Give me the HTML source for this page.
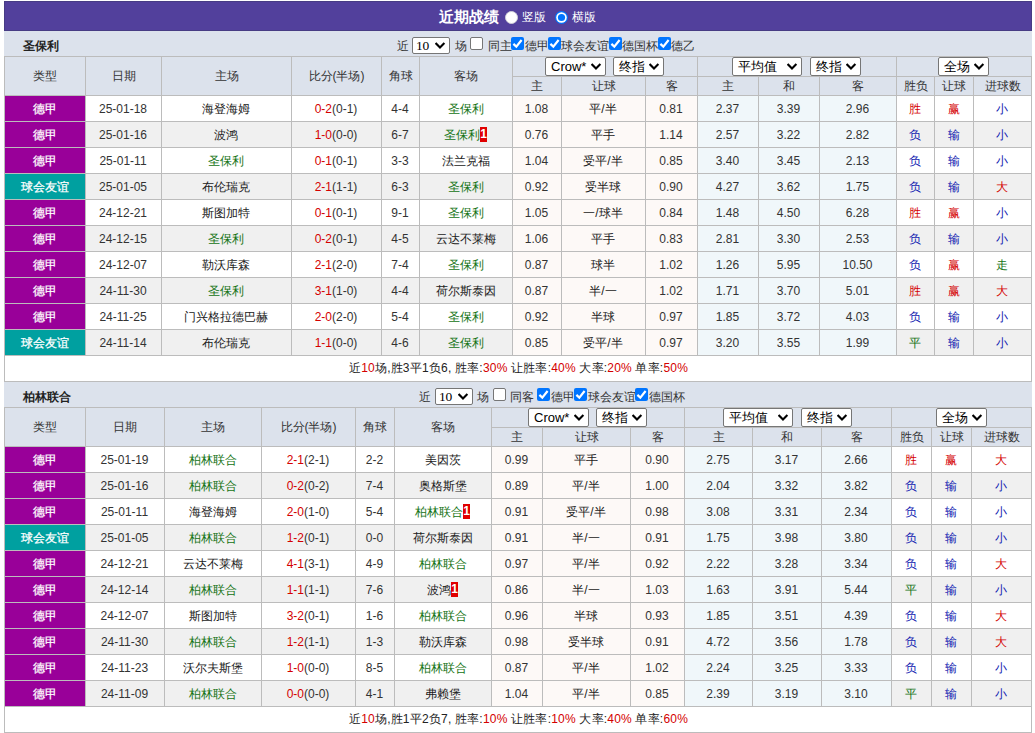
<!DOCTYPE html>
<html><head><meta charset="utf-8"><style>
html,body{margin:0;padding:0;background:#fff;width:1035px;height:733px;overflow:hidden}
body{position:relative;font-family:"Liberation Sans",sans-serif;font-size:12px}
div{position:absolute;box-sizing:border-box;text-align:center;line-height:25px;white-space:nowrap}
em{font-style:normal;color:#d40000}
i.rc{font-style:normal;display:inline-block;background:#e00000;color:#fff;font-weight:bold;width:7px;height:15px;line-height:15px;vertical-align:-2px;font-size:12px;text-align:center;position:relative;top:-3px}
.sel{background:#fff;border:1px solid #767676;border-radius:2px;text-align:left;color:#000}
.cb0{width:13px;height:13px;background:#fff;border:1px solid #767676;border-radius:2px}
.cb1{width:13px;height:13px;background:#0075ff;border-radius:2px;line-height:0}
.cb1 svg{position:absolute;left:0;top:0}
</style></head><body>
<div style="left:4px;top:1px;width:1028px;height:30px;background:#52409c;border:1px solid #473c84"></div>
<div style="left:439px;top:2px;width:70px;height:30px;color:#fff;font-weight:bold;font-size:15px;line-height:30px;text-align:left">近期战绩</div>
<div style="left:505px;top:11px;width:13px;height:13px;line-height:0"><svg width="13" height="13"><circle cx="6.5" cy="6.5" r="6" fill="#fff" stroke="#d0d0d8" stroke-width="1"/></svg></div>
<div style="left:522px;top:2px;width:40px;height:30px;color:#fff;line-height:30px;text-align:left">竖版</div>
<div style="left:555px;top:11px;width:13px;height:13px;line-height:0"><svg width="13" height="13"><circle cx="6.5" cy="6.5" r="6.5" fill="#0075ff"/><circle cx="6.5" cy="6.5" r="5.3" fill="#fff"/><circle cx="6.5" cy="6.5" r="3.6" fill="#0075ff"/></svg></div>
<div style="left:572px;top:2px;width:40px;height:30px;color:#fff;line-height:30px;text-align:left">横版</div>
<div style="left:4px;top:31px;width:1028px;height:25px;background:#dce2ec"></div>
<div style="left:23px;top:34px;width:200px;height:25px;font-weight:bold;color:#222;line-height:25px;text-align:left">圣保利</div>
<div style="left:396.6px;top:34px;width:100px;height:25px;color:#333;text-align:left">近</div>
<div class="sel" style="left:412px;top:37px;width:38px;height:17px;line-height:15px;padding-left:3px;font-family:Liberation Serif,serif;font-size:13.5px;letter-spacing:-0.3px">10<svg width="11" height="7" viewBox="0 0 11 7" style="position:absolute;right:3px;top:4px"><polyline points="0.6,1 5,5.4 9.4,1" fill="none" stroke="#000" stroke-width="2.1"/></svg></div>
<div style="left:455px;top:34px;width:100px;height:25px;color:#333;text-align:left">场</div>
<div class="cb0" style="left:470px;top:37px"></div>
<div style="left:487.7px;top:34px;width:100px;height:25px;color:#333;text-align:left">同主</div>
<div class="cb1" style="left:511px;top:37px"><svg width="13" height="13" viewBox="0 0 13 13"><polyline points="2.4,6.9 5.3,9.6 10.6,3" fill="none" stroke="#fff" stroke-width="2.2"/></svg></div>
<div style="left:525px;top:34px;width:100px;height:25px;color:#333;text-align:left">德甲</div>
<div class="cb1" style="left:548px;top:37px"><svg width="13" height="13" viewBox="0 0 13 13"><polyline points="2.4,6.9 5.3,9.6 10.6,3" fill="none" stroke="#fff" stroke-width="2.2"/></svg></div>
<div style="left:561.3px;top:34px;width:100px;height:25px;color:#333;text-align:left">球会友谊</div>
<div class="cb1" style="left:609px;top:37px"><svg width="13" height="13" viewBox="0 0 13 13"><polyline points="2.4,6.9 5.3,9.6 10.6,3" fill="none" stroke="#fff" stroke-width="2.2"/></svg></div>
<div style="left:622px;top:34px;width:100px;height:25px;color:#333;text-align:left">德国杯</div>
<div class="cb1" style="left:658px;top:37px"><svg width="13" height="13" viewBox="0 0 13 13"><polyline points="2.4,6.9 5.3,9.6 10.6,3" fill="none" stroke="#fff" stroke-width="2.2"/></svg></div>
<div style="left:671px;top:34px;width:100px;height:25px;color:#333;text-align:left">德乙</div>
<div style="left:4px;top:56px;width:1028px;height:40px;background:#dce2ec"></div>
<div style="left:5px;top:96px;width:1026px;height:25px;background:#ffffff"></div>
<div style="left:5px;top:96px;width:80px;height:25px;background:#990099"></div>
<div style="left:5px;top:97px;width:80px;height:25px;color:#fff;-webkit-text-stroke:0.25px #fff">德甲</div>
<div style="left:513px;top:96px;width:184px;height:25px;background:#fdf9f7"></div>
<div style="left:698px;top:96px;width:198px;height:25px;background:#f0f7fa"></div>
<div style="left:85.5px;top:97px;width:75px;height:25px;color:#333">25-01-18</div>
<div style="left:161.5px;top:97px;width:129px;height:25px;color:#222"><span style="color:#222">海登海姆</span></div>
<div style="left:291.5px;top:97px;width:89px;height:25px;color:#222"><span style="color:#d40000">0-2</span><span style="color:#333">(0-1)</span></div>
<div style="left:381.5px;top:97px;width:37px;height:25px;color:#333">4-4</div>
<div style="left:419.5px;top:97px;width:92px;height:25px;color:#222"><span style="color:#137313">圣保利</span></div>
<div style="left:512.5px;top:97px;width:48px;height:25px;color:#333">1.08</div>
<div style="left:561.5px;top:97px;width:83px;height:25px;color:#222">平/半</div>
<div style="left:645.5px;top:97px;width:51px;height:25px;color:#333">0.81</div>
<div style="left:697.5px;top:97px;width:60px;height:25px;color:#333">2.37</div>
<div style="left:758.5px;top:97px;width:60px;height:25px;color:#333">3.39</div>
<div style="left:819.5px;top:97px;width:76px;height:25px;color:#333">2.96</div>
<div style="left:896.5px;top:97px;width:37px;height:25px;color:#222"><span style="color:#d40000">胜</span></div>
<div style="left:934.5px;top:97px;width:38px;height:25px;color:#222"><span style="color:#d40000">赢</span></div>
<div style="left:973.5px;top:97px;width:57px;height:25px;color:#222"><span style="color:#1020b0">小</span></div>
<div style="left:5px;top:122px;width:1026px;height:25px;background:#f0f0f0"></div>
<div style="left:5px;top:122px;width:80px;height:25px;background:#990099"></div>
<div style="left:5px;top:123px;width:80px;height:25px;color:#fff;-webkit-text-stroke:0.25px #fff">德甲</div>
<div style="left:513px;top:122px;width:184px;height:25px;background:#fdf9f7"></div>
<div style="left:698px;top:122px;width:198px;height:25px;background:#f0f7fa"></div>
<div style="left:85.5px;top:123px;width:75px;height:25px;color:#333">25-01-16</div>
<div style="left:161.5px;top:123px;width:129px;height:25px;color:#222"><span style="color:#222">波鸿</span></div>
<div style="left:291.5px;top:123px;width:89px;height:25px;color:#222"><span style="color:#d40000">1-0</span><span style="color:#333">(0-0)</span></div>
<div style="left:381.5px;top:123px;width:37px;height:25px;color:#333">6-7</div>
<div style="left:419.5px;top:123px;width:92px;height:25px;color:#222"><span style="color:#137313">圣保利</span><i class="rc">1</i></div>
<div style="left:512.5px;top:123px;width:48px;height:25px;color:#333">0.76</div>
<div style="left:561.5px;top:123px;width:83px;height:25px;color:#222">平手</div>
<div style="left:645.5px;top:123px;width:51px;height:25px;color:#333">1.14</div>
<div style="left:697.5px;top:123px;width:60px;height:25px;color:#333">2.57</div>
<div style="left:758.5px;top:123px;width:60px;height:25px;color:#333">3.22</div>
<div style="left:819.5px;top:123px;width:76px;height:25px;color:#333">2.82</div>
<div style="left:896.5px;top:123px;width:37px;height:25px;color:#222"><span style="color:#1020b0">负</span></div>
<div style="left:934.5px;top:123px;width:38px;height:25px;color:#222"><span style="color:#1020b0">输</span></div>
<div style="left:973.5px;top:123px;width:57px;height:25px;color:#222"><span style="color:#1020b0">小</span></div>
<div style="left:5px;top:148px;width:1026px;height:25px;background:#ffffff"></div>
<div style="left:5px;top:148px;width:80px;height:25px;background:#990099"></div>
<div style="left:5px;top:149px;width:80px;height:25px;color:#fff;-webkit-text-stroke:0.25px #fff">德甲</div>
<div style="left:513px;top:148px;width:184px;height:25px;background:#fdf9f7"></div>
<div style="left:698px;top:148px;width:198px;height:25px;background:#f0f7fa"></div>
<div style="left:85.5px;top:149px;width:75px;height:25px;color:#333">25-01-11</div>
<div style="left:161.5px;top:149px;width:129px;height:25px;color:#222"><span style="color:#137313">圣保利</span></div>
<div style="left:291.5px;top:149px;width:89px;height:25px;color:#222"><span style="color:#d40000">0-1</span><span style="color:#333">(0-1)</span></div>
<div style="left:381.5px;top:149px;width:37px;height:25px;color:#333">3-3</div>
<div style="left:419.5px;top:149px;width:92px;height:25px;color:#222"><span style="color:#222">法兰克福</span></div>
<div style="left:512.5px;top:149px;width:48px;height:25px;color:#333">1.04</div>
<div style="left:561.5px;top:149px;width:83px;height:25px;color:#222">受平/半</div>
<div style="left:645.5px;top:149px;width:51px;height:25px;color:#333">0.85</div>
<div style="left:697.5px;top:149px;width:60px;height:25px;color:#333">3.40</div>
<div style="left:758.5px;top:149px;width:60px;height:25px;color:#333">3.45</div>
<div style="left:819.5px;top:149px;width:76px;height:25px;color:#333">2.13</div>
<div style="left:896.5px;top:149px;width:37px;height:25px;color:#222"><span style="color:#1020b0">负</span></div>
<div style="left:934.5px;top:149px;width:38px;height:25px;color:#222"><span style="color:#1020b0">输</span></div>
<div style="left:973.5px;top:149px;width:57px;height:25px;color:#222"><span style="color:#1020b0">小</span></div>
<div style="left:5px;top:174px;width:1026px;height:25px;background:#f0f0f0"></div>
<div style="left:5px;top:174px;width:80px;height:25px;background:#00a0a0"></div>
<div style="left:5px;top:175px;width:80px;height:25px;color:#fff;-webkit-text-stroke:0.25px #fff">球会友谊</div>
<div style="left:513px;top:174px;width:184px;height:25px;background:#fdf9f7"></div>
<div style="left:698px;top:174px;width:198px;height:25px;background:#f0f7fa"></div>
<div style="left:85.5px;top:175px;width:75px;height:25px;color:#333">25-01-05</div>
<div style="left:161.5px;top:175px;width:129px;height:25px;color:#222"><span style="color:#222">布伦瑞克</span></div>
<div style="left:291.5px;top:175px;width:89px;height:25px;color:#222"><span style="color:#d40000">2-1</span><span style="color:#333">(1-1)</span></div>
<div style="left:381.5px;top:175px;width:37px;height:25px;color:#333">6-3</div>
<div style="left:419.5px;top:175px;width:92px;height:25px;color:#222"><span style="color:#137313">圣保利</span></div>
<div style="left:512.5px;top:175px;width:48px;height:25px;color:#333">0.92</div>
<div style="left:561.5px;top:175px;width:83px;height:25px;color:#222">受半球</div>
<div style="left:645.5px;top:175px;width:51px;height:25px;color:#333">0.90</div>
<div style="left:697.5px;top:175px;width:60px;height:25px;color:#333">4.27</div>
<div style="left:758.5px;top:175px;width:60px;height:25px;color:#333">3.62</div>
<div style="left:819.5px;top:175px;width:76px;height:25px;color:#333">1.75</div>
<div style="left:896.5px;top:175px;width:37px;height:25px;color:#222"><span style="color:#1020b0">负</span></div>
<div style="left:934.5px;top:175px;width:38px;height:25px;color:#222"><span style="color:#1020b0">输</span></div>
<div style="left:973.5px;top:175px;width:57px;height:25px;color:#222"><span style="color:#d40000">大</span></div>
<div style="left:5px;top:200px;width:1026px;height:25px;background:#ffffff"></div>
<div style="left:5px;top:200px;width:80px;height:25px;background:#990099"></div>
<div style="left:5px;top:201px;width:80px;height:25px;color:#fff;-webkit-text-stroke:0.25px #fff">德甲</div>
<div style="left:513px;top:200px;width:184px;height:25px;background:#fdf9f7"></div>
<div style="left:698px;top:200px;width:198px;height:25px;background:#f0f7fa"></div>
<div style="left:85.5px;top:201px;width:75px;height:25px;color:#333">24-12-21</div>
<div style="left:161.5px;top:201px;width:129px;height:25px;color:#222"><span style="color:#222">斯图加特</span></div>
<div style="left:291.5px;top:201px;width:89px;height:25px;color:#222"><span style="color:#d40000">0-1</span><span style="color:#333">(0-1)</span></div>
<div style="left:381.5px;top:201px;width:37px;height:25px;color:#333">9-1</div>
<div style="left:419.5px;top:201px;width:92px;height:25px;color:#222"><span style="color:#137313">圣保利</span></div>
<div style="left:512.5px;top:201px;width:48px;height:25px;color:#333">1.05</div>
<div style="left:561.5px;top:201px;width:83px;height:25px;color:#222">一/球半</div>
<div style="left:645.5px;top:201px;width:51px;height:25px;color:#333">0.84</div>
<div style="left:697.5px;top:201px;width:60px;height:25px;color:#333">1.48</div>
<div style="left:758.5px;top:201px;width:60px;height:25px;color:#333">4.50</div>
<div style="left:819.5px;top:201px;width:76px;height:25px;color:#333">6.28</div>
<div style="left:896.5px;top:201px;width:37px;height:25px;color:#222"><span style="color:#d40000">胜</span></div>
<div style="left:934.5px;top:201px;width:38px;height:25px;color:#222"><span style="color:#d40000">赢</span></div>
<div style="left:973.5px;top:201px;width:57px;height:25px;color:#222"><span style="color:#1020b0">小</span></div>
<div style="left:5px;top:226px;width:1026px;height:25px;background:#f0f0f0"></div>
<div style="left:5px;top:226px;width:80px;height:25px;background:#990099"></div>
<div style="left:5px;top:227px;width:80px;height:25px;color:#fff;-webkit-text-stroke:0.25px #fff">德甲</div>
<div style="left:513px;top:226px;width:184px;height:25px;background:#fdf9f7"></div>
<div style="left:698px;top:226px;width:198px;height:25px;background:#f0f7fa"></div>
<div style="left:85.5px;top:227px;width:75px;height:25px;color:#333">24-12-15</div>
<div style="left:161.5px;top:227px;width:129px;height:25px;color:#222"><span style="color:#137313">圣保利</span></div>
<div style="left:291.5px;top:227px;width:89px;height:25px;color:#222"><span style="color:#d40000">0-2</span><span style="color:#333">(0-1)</span></div>
<div style="left:381.5px;top:227px;width:37px;height:25px;color:#333">4-5</div>
<div style="left:419.5px;top:227px;width:92px;height:25px;color:#222"><span style="color:#222">云达不莱梅</span></div>
<div style="left:512.5px;top:227px;width:48px;height:25px;color:#333">1.06</div>
<div style="left:561.5px;top:227px;width:83px;height:25px;color:#222">平手</div>
<div style="left:645.5px;top:227px;width:51px;height:25px;color:#333">0.83</div>
<div style="left:697.5px;top:227px;width:60px;height:25px;color:#333">2.81</div>
<div style="left:758.5px;top:227px;width:60px;height:25px;color:#333">3.30</div>
<div style="left:819.5px;top:227px;width:76px;height:25px;color:#333">2.53</div>
<div style="left:896.5px;top:227px;width:37px;height:25px;color:#222"><span style="color:#1020b0">负</span></div>
<div style="left:934.5px;top:227px;width:38px;height:25px;color:#222"><span style="color:#1020b0">输</span></div>
<div style="left:973.5px;top:227px;width:57px;height:25px;color:#222"><span style="color:#1020b0">小</span></div>
<div style="left:5px;top:252px;width:1026px;height:25px;background:#ffffff"></div>
<div style="left:5px;top:252px;width:80px;height:25px;background:#990099"></div>
<div style="left:5px;top:253px;width:80px;height:25px;color:#fff;-webkit-text-stroke:0.25px #fff">德甲</div>
<div style="left:513px;top:252px;width:184px;height:25px;background:#fdf9f7"></div>
<div style="left:698px;top:252px;width:198px;height:25px;background:#f0f7fa"></div>
<div style="left:85.5px;top:253px;width:75px;height:25px;color:#333">24-12-07</div>
<div style="left:161.5px;top:253px;width:129px;height:25px;color:#222"><span style="color:#222">勒沃库森</span></div>
<div style="left:291.5px;top:253px;width:89px;height:25px;color:#222"><span style="color:#d40000">2-1</span><span style="color:#333">(2-0)</span></div>
<div style="left:381.5px;top:253px;width:37px;height:25px;color:#333">7-4</div>
<div style="left:419.5px;top:253px;width:92px;height:25px;color:#222"><span style="color:#137313">圣保利</span></div>
<div style="left:512.5px;top:253px;width:48px;height:25px;color:#333">0.87</div>
<div style="left:561.5px;top:253px;width:83px;height:25px;color:#222">球半</div>
<div style="left:645.5px;top:253px;width:51px;height:25px;color:#333">1.02</div>
<div style="left:697.5px;top:253px;width:60px;height:25px;color:#333">1.26</div>
<div style="left:758.5px;top:253px;width:60px;height:25px;color:#333">5.95</div>
<div style="left:819.5px;top:253px;width:76px;height:25px;color:#333">10.50</div>
<div style="left:896.5px;top:253px;width:37px;height:25px;color:#222"><span style="color:#1020b0">负</span></div>
<div style="left:934.5px;top:253px;width:38px;height:25px;color:#222"><span style="color:#d40000">赢</span></div>
<div style="left:973.5px;top:253px;width:57px;height:25px;color:#222"><span style="color:#137313">走</span></div>
<div style="left:5px;top:278px;width:1026px;height:25px;background:#f0f0f0"></div>
<div style="left:5px;top:278px;width:80px;height:25px;background:#990099"></div>
<div style="left:5px;top:279px;width:80px;height:25px;color:#fff;-webkit-text-stroke:0.25px #fff">德甲</div>
<div style="left:513px;top:278px;width:184px;height:25px;background:#fdf9f7"></div>
<div style="left:698px;top:278px;width:198px;height:25px;background:#f0f7fa"></div>
<div style="left:85.5px;top:279px;width:75px;height:25px;color:#333">24-11-30</div>
<div style="left:161.5px;top:279px;width:129px;height:25px;color:#222"><span style="color:#137313">圣保利</span></div>
<div style="left:291.5px;top:279px;width:89px;height:25px;color:#222"><span style="color:#d40000">3-1</span><span style="color:#333">(1-0)</span></div>
<div style="left:381.5px;top:279px;width:37px;height:25px;color:#333">4-4</div>
<div style="left:419.5px;top:279px;width:92px;height:25px;color:#222"><span style="color:#222">荷尔斯泰因</span></div>
<div style="left:512.5px;top:279px;width:48px;height:25px;color:#333">0.87</div>
<div style="left:561.5px;top:279px;width:83px;height:25px;color:#222">半/一</div>
<div style="left:645.5px;top:279px;width:51px;height:25px;color:#333">1.02</div>
<div style="left:697.5px;top:279px;width:60px;height:25px;color:#333">1.71</div>
<div style="left:758.5px;top:279px;width:60px;height:25px;color:#333">3.70</div>
<div style="left:819.5px;top:279px;width:76px;height:25px;color:#333">5.01</div>
<div style="left:896.5px;top:279px;width:37px;height:25px;color:#222"><span style="color:#d40000">胜</span></div>
<div style="left:934.5px;top:279px;width:38px;height:25px;color:#222"><span style="color:#d40000">赢</span></div>
<div style="left:973.5px;top:279px;width:57px;height:25px;color:#222"><span style="color:#d40000">大</span></div>
<div style="left:5px;top:304px;width:1026px;height:25px;background:#ffffff"></div>
<div style="left:5px;top:304px;width:80px;height:25px;background:#990099"></div>
<div style="left:5px;top:305px;width:80px;height:25px;color:#fff;-webkit-text-stroke:0.25px #fff">德甲</div>
<div style="left:513px;top:304px;width:184px;height:25px;background:#fdf9f7"></div>
<div style="left:698px;top:304px;width:198px;height:25px;background:#f0f7fa"></div>
<div style="left:85.5px;top:305px;width:75px;height:25px;color:#333">24-11-25</div>
<div style="left:161.5px;top:305px;width:129px;height:25px;color:#222"><span style="color:#222">门兴格拉德巴赫</span></div>
<div style="left:291.5px;top:305px;width:89px;height:25px;color:#222"><span style="color:#d40000">2-0</span><span style="color:#333">(2-0)</span></div>
<div style="left:381.5px;top:305px;width:37px;height:25px;color:#333">5-4</div>
<div style="left:419.5px;top:305px;width:92px;height:25px;color:#222"><span style="color:#137313">圣保利</span></div>
<div style="left:512.5px;top:305px;width:48px;height:25px;color:#333">0.92</div>
<div style="left:561.5px;top:305px;width:83px;height:25px;color:#222">半球</div>
<div style="left:645.5px;top:305px;width:51px;height:25px;color:#333">0.97</div>
<div style="left:697.5px;top:305px;width:60px;height:25px;color:#333">1.85</div>
<div style="left:758.5px;top:305px;width:60px;height:25px;color:#333">3.72</div>
<div style="left:819.5px;top:305px;width:76px;height:25px;color:#333">4.03</div>
<div style="left:896.5px;top:305px;width:37px;height:25px;color:#222"><span style="color:#1020b0">负</span></div>
<div style="left:934.5px;top:305px;width:38px;height:25px;color:#222"><span style="color:#1020b0">输</span></div>
<div style="left:973.5px;top:305px;width:57px;height:25px;color:#222"><span style="color:#1020b0">小</span></div>
<div style="left:5px;top:330px;width:1026px;height:25px;background:#f0f0f0"></div>
<div style="left:5px;top:330px;width:80px;height:25px;background:#00a0a0"></div>
<div style="left:5px;top:331px;width:80px;height:25px;color:#fff;-webkit-text-stroke:0.25px #fff">球会友谊</div>
<div style="left:513px;top:330px;width:184px;height:25px;background:#fdf9f7"></div>
<div style="left:698px;top:330px;width:198px;height:25px;background:#f0f7fa"></div>
<div style="left:85.5px;top:331px;width:75px;height:25px;color:#333">24-11-14</div>
<div style="left:161.5px;top:331px;width:129px;height:25px;color:#222"><span style="color:#222">布伦瑞克</span></div>
<div style="left:291.5px;top:331px;width:89px;height:25px;color:#222"><span style="color:#d40000">1-1</span><span style="color:#333">(0-0)</span></div>
<div style="left:381.5px;top:331px;width:37px;height:25px;color:#333">4-6</div>
<div style="left:419.5px;top:331px;width:92px;height:25px;color:#222"><span style="color:#137313">圣保利</span></div>
<div style="left:512.5px;top:331px;width:48px;height:25px;color:#333">0.85</div>
<div style="left:561.5px;top:331px;width:83px;height:25px;color:#222">受平/半</div>
<div style="left:645.5px;top:331px;width:51px;height:25px;color:#333">0.97</div>
<div style="left:697.5px;top:331px;width:60px;height:25px;color:#333">3.20</div>
<div style="left:758.5px;top:331px;width:60px;height:25px;color:#333">3.55</div>
<div style="left:819.5px;top:331px;width:76px;height:25px;color:#333">1.99</div>
<div style="left:896.5px;top:331px;width:37px;height:25px;color:#222"><span style="color:#137313">平</span></div>
<div style="left:934.5px;top:331px;width:38px;height:25px;color:#222"><span style="color:#1020b0">输</span></div>
<div style="left:973.5px;top:331px;width:57px;height:25px;color:#222"><span style="color:#1020b0">小</span></div>
<div style="left:5px;top:356px;width:1026px;height:25px;background:#fff"></div>
<div style="left:5px;top:356px;width:1026px;height:25px;color:#222;letter-spacing:0.2px;padding-left:1px">近<em>10</em>场,胜3平1负6, 胜率:<em>30%</em> 让胜率:<em>40%</em> 大率:<em>20%</em> 单率:<em>50%</em></div>
<div style="left:5px;top:57px;width:80px;height:39px;color:#333;line-height:39px">类型</div>
<div style="left:86px;top:57px;width:75px;height:39px;color:#333;line-height:39px">日期</div>
<div style="left:162px;top:57px;width:129px;height:39px;color:#333;line-height:39px">主场</div>
<div style="left:292px;top:57px;width:89px;height:39px;color:#333;line-height:39px">比分(半场)</div>
<div style="left:382px;top:57px;width:37px;height:39px;color:#333;line-height:39px">角球</div>
<div style="left:420px;top:57px;width:92px;height:39px;color:#333;line-height:39px">客场</div>
<div style="left:513px;top:77px;width:48px;height:18px;color:#333;line-height:18px">主</div>
<div style="left:562px;top:77px;width:83px;height:18px;color:#333;line-height:18px">让球</div>
<div style="left:646px;top:77px;width:51px;height:18px;color:#333;line-height:18px">客</div>
<div style="left:698px;top:77px;width:60px;height:18px;color:#333;line-height:18px">主</div>
<div style="left:759px;top:77px;width:60px;height:18px;color:#333;line-height:18px">和</div>
<div style="left:820px;top:77px;width:76px;height:18px;color:#333;line-height:18px">客</div>
<div style="left:897px;top:77px;width:37px;height:18px;color:#333;line-height:18px">胜负</div>
<div style="left:935px;top:77px;width:38px;height:18px;color:#333;line-height:18px">让球</div>
<div style="left:974px;top:77px;width:57px;height:18px;color:#333;line-height:18px">进球数</div>
<div style="left:4px;top:56px;width:1px;height:326px;background:#bcbcbc"></div>
<div style="left:85px;top:56px;width:1px;height:300px;background:#bcbcbc"></div>
<div style="left:161px;top:56px;width:1px;height:300px;background:#bcbcbc"></div>
<div style="left:291px;top:56px;width:1px;height:300px;background:#bcbcbc"></div>
<div style="left:381px;top:56px;width:1px;height:300px;background:#bcbcbc"></div>
<div style="left:419px;top:56px;width:1px;height:300px;background:#bcbcbc"></div>
<div style="left:512px;top:56px;width:1px;height:300px;background:#bcbcbc"></div>
<div style="left:561px;top:76px;width:1px;height:280px;background:#bcbcbc"></div>
<div style="left:645px;top:76px;width:1px;height:280px;background:#bcbcbc"></div>
<div style="left:697px;top:56px;width:1px;height:300px;background:#bcbcbc"></div>
<div style="left:758px;top:76px;width:1px;height:280px;background:#bcbcbc"></div>
<div style="left:819px;top:76px;width:1px;height:280px;background:#bcbcbc"></div>
<div style="left:896px;top:56px;width:1px;height:300px;background:#bcbcbc"></div>
<div style="left:934px;top:76px;width:1px;height:280px;background:#bcbcbc"></div>
<div style="left:973px;top:76px;width:1px;height:280px;background:#bcbcbc"></div>
<div style="left:1031px;top:56px;width:1px;height:326px;background:#bcbcbc"></div>
<div style="left:4px;top:56px;width:1028px;height:1px;background:#bcbcbc"></div>
<div style="left:512px;top:76px;width:519px;height:1px;background:#bcbcbc"></div>
<div style="left:4px;top:95px;width:1028px;height:1px;background:#bcbcbc"></div>
<div style="left:4px;top:121px;width:1028px;height:1px;background:#bcbcbc"></div>
<div style="left:4px;top:147px;width:1028px;height:1px;background:#bcbcbc"></div>
<div style="left:4px;top:173px;width:1028px;height:1px;background:#bcbcbc"></div>
<div style="left:4px;top:199px;width:1028px;height:1px;background:#bcbcbc"></div>
<div style="left:4px;top:225px;width:1028px;height:1px;background:#bcbcbc"></div>
<div style="left:4px;top:251px;width:1028px;height:1px;background:#bcbcbc"></div>
<div style="left:4px;top:277px;width:1028px;height:1px;background:#bcbcbc"></div>
<div style="left:4px;top:303px;width:1028px;height:1px;background:#bcbcbc"></div>
<div style="left:4px;top:329px;width:1028px;height:1px;background:#bcbcbc"></div>
<div style="left:4px;top:355px;width:1028px;height:1px;background:#bcbcbc"></div>
<div style="left:4px;top:381px;width:1028px;height:1px;background:#bcbcbc"></div>
<div style="left:4px;top:381px;width:1028px;height:1px;background:#bcbcbc"></div>
<div class="sel" style="left:545px;top:57px;width:61px;height:19px;line-height:17px;padding-left:5px;font-size:13px">Crow*<svg width="11" height="7" viewBox="0 0 11 7" style="position:absolute;right:3px;top:5px"><polyline points="0.6,1 5,5.4 9.4,1" fill="none" stroke="#000" stroke-width="2.1"/></svg></div>
<div class="sel" style="left:613px;top:57px;width:51px;height:19px;line-height:17px;padding-left:5px;font-size:13px">终指<svg width="11" height="7" viewBox="0 0 11 7" style="position:absolute;right:3px;top:5px"><polyline points="0.6,1 5,5.4 9.4,1" fill="none" stroke="#000" stroke-width="2.1"/></svg></div>
<div class="sel" style="left:732px;top:57px;width:70px;height:19px;line-height:17px;padding-left:5px;font-size:13px">平均值<svg width="11" height="7" viewBox="0 0 11 7" style="position:absolute;right:3px;top:5px"><polyline points="0.6,1 5,5.4 9.4,1" fill="none" stroke="#000" stroke-width="2.1"/></svg></div>
<div class="sel" style="left:810px;top:57px;width:51px;height:19px;line-height:17px;padding-left:5px;font-size:13px">终指<svg width="11" height="7" viewBox="0 0 11 7" style="position:absolute;right:3px;top:5px"><polyline points="0.6,1 5,5.4 9.4,1" fill="none" stroke="#000" stroke-width="2.1"/></svg></div>
<div class="sel" style="left:938px;top:57px;width:51px;height:19px;line-height:17px;padding-left:5px;font-size:13px">全场<svg width="11" height="7" viewBox="0 0 11 7" style="position:absolute;right:3px;top:5px"><polyline points="0.6,1 5,5.4 9.4,1" fill="none" stroke="#000" stroke-width="2.1"/></svg></div>
<div style="left:4px;top:382px;width:1028px;height:25px;background:#dce2ec"></div>
<div style="left:23px;top:385px;width:200px;height:25px;font-weight:bold;color:#222;line-height:25px;text-align:left">柏林联合</div>
<div style="left:419.4px;top:385px;width:100px;height:25px;color:#333;text-align:left">近</div>
<div class="sel" style="left:435px;top:388px;width:38px;height:17px;line-height:15px;padding-left:3px;font-family:Liberation Serif,serif;font-size:13.5px;letter-spacing:-0.3px">10<svg width="11" height="7" viewBox="0 0 11 7" style="position:absolute;right:3px;top:4px"><polyline points="0.6,1 5,5.4 9.4,1" fill="none" stroke="#000" stroke-width="2.1"/></svg></div>
<div style="left:477.4px;top:385px;width:100px;height:25px;color:#333;text-align:left">场</div>
<div class="cb0" style="left:493px;top:388px"></div>
<div style="left:510px;top:385px;width:100px;height:25px;color:#333;text-align:left">同客</div>
<div class="cb1" style="left:537px;top:388px"><svg width="13" height="13" viewBox="0 0 13 13"><polyline points="2.4,6.9 5.3,9.6 10.6,3" fill="none" stroke="#fff" stroke-width="2.2"/></svg></div>
<div style="left:551.2px;top:385px;width:100px;height:25px;color:#333;text-align:left">德甲</div>
<div class="cb1" style="left:574px;top:388px"><svg width="13" height="13" viewBox="0 0 13 13"><polyline points="2.4,6.9 5.3,9.6 10.6,3" fill="none" stroke="#fff" stroke-width="2.2"/></svg></div>
<div style="left:588px;top:385px;width:100px;height:25px;color:#333;text-align:left">球会友谊</div>
<div class="cb1" style="left:635px;top:388px"><svg width="13" height="13" viewBox="0 0 13 13"><polyline points="2.4,6.9 5.3,9.6 10.6,3" fill="none" stroke="#fff" stroke-width="2.2"/></svg></div>
<div style="left:649.3px;top:385px;width:100px;height:25px;color:#333;text-align:left">德国杯</div>
<div style="left:4px;top:407px;width:1028px;height:40px;background:#dce2ec"></div>
<div style="left:5px;top:447px;width:1026px;height:25px;background:#ffffff"></div>
<div style="left:5px;top:447px;width:80px;height:25px;background:#990099"></div>
<div style="left:5px;top:448px;width:80px;height:25px;color:#fff;-webkit-text-stroke:0.25px #fff">德甲</div>
<div style="left:492px;top:447px;width:192px;height:25px;background:#fdf9f7"></div>
<div style="left:685px;top:447px;width:206px;height:25px;background:#f0f7fa"></div>
<div style="left:85.5px;top:448px;width:78px;height:25px;color:#333">25-01-19</div>
<div style="left:164.5px;top:448px;width:96px;height:25px;color:#222"><span style="color:#137313">柏林联合</span></div>
<div style="left:261.5px;top:448px;width:93px;height:25px;color:#222"><span style="color:#d40000">2-1</span><span style="color:#333">(2-1)</span></div>
<div style="left:355.5px;top:448px;width:38px;height:25px;color:#333">2-2</div>
<div style="left:394.5px;top:448px;width:96px;height:25px;color:#222"><span style="color:#222">美因茨</span></div>
<div style="left:491.5px;top:448px;width:50px;height:25px;color:#333">0.99</div>
<div style="left:542.5px;top:448px;width:87px;height:25px;color:#222">平手</div>
<div style="left:630.5px;top:448px;width:53px;height:25px;color:#333">0.90</div>
<div style="left:684.5px;top:448px;width:67px;height:25px;color:#333">2.75</div>
<div style="left:752.5px;top:448px;width:68px;height:25px;color:#333">3.17</div>
<div style="left:821.5px;top:448px;width:69px;height:25px;color:#333">2.66</div>
<div style="left:891.5px;top:448px;width:39px;height:25px;color:#222"><span style="color:#d40000">胜</span></div>
<div style="left:931.5px;top:448px;width:39px;height:25px;color:#222"><span style="color:#d40000">赢</span></div>
<div style="left:971.5px;top:448px;width:59px;height:25px;color:#222"><span style="color:#d40000">大</span></div>
<div style="left:5px;top:473px;width:1026px;height:25px;background:#f0f0f0"></div>
<div style="left:5px;top:473px;width:80px;height:25px;background:#990099"></div>
<div style="left:5px;top:474px;width:80px;height:25px;color:#fff;-webkit-text-stroke:0.25px #fff">德甲</div>
<div style="left:492px;top:473px;width:192px;height:25px;background:#fdf9f7"></div>
<div style="left:685px;top:473px;width:206px;height:25px;background:#f0f7fa"></div>
<div style="left:85.5px;top:474px;width:78px;height:25px;color:#333">25-01-16</div>
<div style="left:164.5px;top:474px;width:96px;height:25px;color:#222"><span style="color:#137313">柏林联合</span></div>
<div style="left:261.5px;top:474px;width:93px;height:25px;color:#222"><span style="color:#d40000">0-2</span><span style="color:#333">(0-2)</span></div>
<div style="left:355.5px;top:474px;width:38px;height:25px;color:#333">7-4</div>
<div style="left:394.5px;top:474px;width:96px;height:25px;color:#222"><span style="color:#222">奥格斯堡</span></div>
<div style="left:491.5px;top:474px;width:50px;height:25px;color:#333">0.89</div>
<div style="left:542.5px;top:474px;width:87px;height:25px;color:#222">平/半</div>
<div style="left:630.5px;top:474px;width:53px;height:25px;color:#333">1.00</div>
<div style="left:684.5px;top:474px;width:67px;height:25px;color:#333">2.04</div>
<div style="left:752.5px;top:474px;width:68px;height:25px;color:#333">3.32</div>
<div style="left:821.5px;top:474px;width:69px;height:25px;color:#333">3.82</div>
<div style="left:891.5px;top:474px;width:39px;height:25px;color:#222"><span style="color:#1020b0">负</span></div>
<div style="left:931.5px;top:474px;width:39px;height:25px;color:#222"><span style="color:#1020b0">输</span></div>
<div style="left:971.5px;top:474px;width:59px;height:25px;color:#222"><span style="color:#1020b0">小</span></div>
<div style="left:5px;top:499px;width:1026px;height:25px;background:#ffffff"></div>
<div style="left:5px;top:499px;width:80px;height:25px;background:#990099"></div>
<div style="left:5px;top:500px;width:80px;height:25px;color:#fff;-webkit-text-stroke:0.25px #fff">德甲</div>
<div style="left:492px;top:499px;width:192px;height:25px;background:#fdf9f7"></div>
<div style="left:685px;top:499px;width:206px;height:25px;background:#f0f7fa"></div>
<div style="left:85.5px;top:500px;width:78px;height:25px;color:#333">25-01-11</div>
<div style="left:164.5px;top:500px;width:96px;height:25px;color:#222"><span style="color:#222">海登海姆</span></div>
<div style="left:261.5px;top:500px;width:93px;height:25px;color:#222"><span style="color:#d40000">2-0</span><span style="color:#333">(1-0)</span></div>
<div style="left:355.5px;top:500px;width:38px;height:25px;color:#333">5-4</div>
<div style="left:394.5px;top:500px;width:96px;height:25px;color:#222"><span style="color:#137313">柏林联合</span><i class="rc">1</i></div>
<div style="left:491.5px;top:500px;width:50px;height:25px;color:#333">0.91</div>
<div style="left:542.5px;top:500px;width:87px;height:25px;color:#222">受平/半</div>
<div style="left:630.5px;top:500px;width:53px;height:25px;color:#333">0.98</div>
<div style="left:684.5px;top:500px;width:67px;height:25px;color:#333">3.08</div>
<div style="left:752.5px;top:500px;width:68px;height:25px;color:#333">3.31</div>
<div style="left:821.5px;top:500px;width:69px;height:25px;color:#333">2.34</div>
<div style="left:891.5px;top:500px;width:39px;height:25px;color:#222"><span style="color:#1020b0">负</span></div>
<div style="left:931.5px;top:500px;width:39px;height:25px;color:#222"><span style="color:#1020b0">输</span></div>
<div style="left:971.5px;top:500px;width:59px;height:25px;color:#222"><span style="color:#1020b0">小</span></div>
<div style="left:5px;top:525px;width:1026px;height:25px;background:#f0f0f0"></div>
<div style="left:5px;top:525px;width:80px;height:25px;background:#00a0a0"></div>
<div style="left:5px;top:526px;width:80px;height:25px;color:#fff;-webkit-text-stroke:0.25px #fff">球会友谊</div>
<div style="left:492px;top:525px;width:192px;height:25px;background:#fdf9f7"></div>
<div style="left:685px;top:525px;width:206px;height:25px;background:#f0f7fa"></div>
<div style="left:85.5px;top:526px;width:78px;height:25px;color:#333">25-01-05</div>
<div style="left:164.5px;top:526px;width:96px;height:25px;color:#222"><span style="color:#137313">柏林联合</span></div>
<div style="left:261.5px;top:526px;width:93px;height:25px;color:#222"><span style="color:#d40000">1-2</span><span style="color:#333">(0-1)</span></div>
<div style="left:355.5px;top:526px;width:38px;height:25px;color:#333">0-0</div>
<div style="left:394.5px;top:526px;width:96px;height:25px;color:#222"><span style="color:#222">荷尔斯泰因</span></div>
<div style="left:491.5px;top:526px;width:50px;height:25px;color:#333">0.91</div>
<div style="left:542.5px;top:526px;width:87px;height:25px;color:#222">半/一</div>
<div style="left:630.5px;top:526px;width:53px;height:25px;color:#333">0.91</div>
<div style="left:684.5px;top:526px;width:67px;height:25px;color:#333">1.75</div>
<div style="left:752.5px;top:526px;width:68px;height:25px;color:#333">3.98</div>
<div style="left:821.5px;top:526px;width:69px;height:25px;color:#333">3.80</div>
<div style="left:891.5px;top:526px;width:39px;height:25px;color:#222"><span style="color:#1020b0">负</span></div>
<div style="left:931.5px;top:526px;width:39px;height:25px;color:#222"><span style="color:#1020b0">输</span></div>
<div style="left:971.5px;top:526px;width:59px;height:25px;color:#222"><span style="color:#1020b0">小</span></div>
<div style="left:5px;top:551px;width:1026px;height:25px;background:#ffffff"></div>
<div style="left:5px;top:551px;width:80px;height:25px;background:#990099"></div>
<div style="left:5px;top:552px;width:80px;height:25px;color:#fff;-webkit-text-stroke:0.25px #fff">德甲</div>
<div style="left:492px;top:551px;width:192px;height:25px;background:#fdf9f7"></div>
<div style="left:685px;top:551px;width:206px;height:25px;background:#f0f7fa"></div>
<div style="left:85.5px;top:552px;width:78px;height:25px;color:#333">24-12-21</div>
<div style="left:164.5px;top:552px;width:96px;height:25px;color:#222"><span style="color:#222">云达不莱梅</span></div>
<div style="left:261.5px;top:552px;width:93px;height:25px;color:#222"><span style="color:#d40000">4-1</span><span style="color:#333">(3-1)</span></div>
<div style="left:355.5px;top:552px;width:38px;height:25px;color:#333">4-9</div>
<div style="left:394.5px;top:552px;width:96px;height:25px;color:#222"><span style="color:#137313">柏林联合</span></div>
<div style="left:491.5px;top:552px;width:50px;height:25px;color:#333">0.97</div>
<div style="left:542.5px;top:552px;width:87px;height:25px;color:#222">平/半</div>
<div style="left:630.5px;top:552px;width:53px;height:25px;color:#333">0.92</div>
<div style="left:684.5px;top:552px;width:67px;height:25px;color:#333">2.22</div>
<div style="left:752.5px;top:552px;width:68px;height:25px;color:#333">3.28</div>
<div style="left:821.5px;top:552px;width:69px;height:25px;color:#333">3.34</div>
<div style="left:891.5px;top:552px;width:39px;height:25px;color:#222"><span style="color:#1020b0">负</span></div>
<div style="left:931.5px;top:552px;width:39px;height:25px;color:#222"><span style="color:#1020b0">输</span></div>
<div style="left:971.5px;top:552px;width:59px;height:25px;color:#222"><span style="color:#d40000">大</span></div>
<div style="left:5px;top:577px;width:1026px;height:25px;background:#f0f0f0"></div>
<div style="left:5px;top:577px;width:80px;height:25px;background:#990099"></div>
<div style="left:5px;top:578px;width:80px;height:25px;color:#fff;-webkit-text-stroke:0.25px #fff">德甲</div>
<div style="left:492px;top:577px;width:192px;height:25px;background:#fdf9f7"></div>
<div style="left:685px;top:577px;width:206px;height:25px;background:#f0f7fa"></div>
<div style="left:85.5px;top:578px;width:78px;height:25px;color:#333">24-12-14</div>
<div style="left:164.5px;top:578px;width:96px;height:25px;color:#222"><span style="color:#137313">柏林联合</span></div>
<div style="left:261.5px;top:578px;width:93px;height:25px;color:#222"><span style="color:#d40000">1-1</span><span style="color:#333">(1-1)</span></div>
<div style="left:355.5px;top:578px;width:38px;height:25px;color:#333">7-6</div>
<div style="left:394.5px;top:578px;width:96px;height:25px;color:#222"><span style="color:#222">波鸿</span><i class="rc">1</i></div>
<div style="left:491.5px;top:578px;width:50px;height:25px;color:#333">0.86</div>
<div style="left:542.5px;top:578px;width:87px;height:25px;color:#222">半/一</div>
<div style="left:630.5px;top:578px;width:53px;height:25px;color:#333">1.03</div>
<div style="left:684.5px;top:578px;width:67px;height:25px;color:#333">1.63</div>
<div style="left:752.5px;top:578px;width:68px;height:25px;color:#333">3.91</div>
<div style="left:821.5px;top:578px;width:69px;height:25px;color:#333">5.44</div>
<div style="left:891.5px;top:578px;width:39px;height:25px;color:#222"><span style="color:#137313">平</span></div>
<div style="left:931.5px;top:578px;width:39px;height:25px;color:#222"><span style="color:#1020b0">输</span></div>
<div style="left:971.5px;top:578px;width:59px;height:25px;color:#222"><span style="color:#1020b0">小</span></div>
<div style="left:5px;top:603px;width:1026px;height:25px;background:#ffffff"></div>
<div style="left:5px;top:603px;width:80px;height:25px;background:#990099"></div>
<div style="left:5px;top:604px;width:80px;height:25px;color:#fff;-webkit-text-stroke:0.25px #fff">德甲</div>
<div style="left:492px;top:603px;width:192px;height:25px;background:#fdf9f7"></div>
<div style="left:685px;top:603px;width:206px;height:25px;background:#f0f7fa"></div>
<div style="left:85.5px;top:604px;width:78px;height:25px;color:#333">24-12-07</div>
<div style="left:164.5px;top:604px;width:96px;height:25px;color:#222"><span style="color:#222">斯图加特</span></div>
<div style="left:261.5px;top:604px;width:93px;height:25px;color:#222"><span style="color:#d40000">3-2</span><span style="color:#333">(0-1)</span></div>
<div style="left:355.5px;top:604px;width:38px;height:25px;color:#333">1-6</div>
<div style="left:394.5px;top:604px;width:96px;height:25px;color:#222"><span style="color:#137313">柏林联合</span></div>
<div style="left:491.5px;top:604px;width:50px;height:25px;color:#333">0.96</div>
<div style="left:542.5px;top:604px;width:87px;height:25px;color:#222">半球</div>
<div style="left:630.5px;top:604px;width:53px;height:25px;color:#333">0.93</div>
<div style="left:684.5px;top:604px;width:67px;height:25px;color:#333">1.85</div>
<div style="left:752.5px;top:604px;width:68px;height:25px;color:#333">3.51</div>
<div style="left:821.5px;top:604px;width:69px;height:25px;color:#333">4.39</div>
<div style="left:891.5px;top:604px;width:39px;height:25px;color:#222"><span style="color:#1020b0">负</span></div>
<div style="left:931.5px;top:604px;width:39px;height:25px;color:#222"><span style="color:#1020b0">输</span></div>
<div style="left:971.5px;top:604px;width:59px;height:25px;color:#222"><span style="color:#d40000">大</span></div>
<div style="left:5px;top:629px;width:1026px;height:25px;background:#f0f0f0"></div>
<div style="left:5px;top:629px;width:80px;height:25px;background:#990099"></div>
<div style="left:5px;top:630px;width:80px;height:25px;color:#fff;-webkit-text-stroke:0.25px #fff">德甲</div>
<div style="left:492px;top:629px;width:192px;height:25px;background:#fdf9f7"></div>
<div style="left:685px;top:629px;width:206px;height:25px;background:#f0f7fa"></div>
<div style="left:85.5px;top:630px;width:78px;height:25px;color:#333">24-11-30</div>
<div style="left:164.5px;top:630px;width:96px;height:25px;color:#222"><span style="color:#137313">柏林联合</span></div>
<div style="left:261.5px;top:630px;width:93px;height:25px;color:#222"><span style="color:#d40000">1-2</span><span style="color:#333">(1-1)</span></div>
<div style="left:355.5px;top:630px;width:38px;height:25px;color:#333">1-3</div>
<div style="left:394.5px;top:630px;width:96px;height:25px;color:#222"><span style="color:#222">勒沃库森</span></div>
<div style="left:491.5px;top:630px;width:50px;height:25px;color:#333">0.98</div>
<div style="left:542.5px;top:630px;width:87px;height:25px;color:#222">受半球</div>
<div style="left:630.5px;top:630px;width:53px;height:25px;color:#333">0.91</div>
<div style="left:684.5px;top:630px;width:67px;height:25px;color:#333">4.72</div>
<div style="left:752.5px;top:630px;width:68px;height:25px;color:#333">3.56</div>
<div style="left:821.5px;top:630px;width:69px;height:25px;color:#333">1.78</div>
<div style="left:891.5px;top:630px;width:39px;height:25px;color:#222"><span style="color:#1020b0">负</span></div>
<div style="left:931.5px;top:630px;width:39px;height:25px;color:#222"><span style="color:#1020b0">输</span></div>
<div style="left:971.5px;top:630px;width:59px;height:25px;color:#222"><span style="color:#d40000">大</span></div>
<div style="left:5px;top:655px;width:1026px;height:25px;background:#ffffff"></div>
<div style="left:5px;top:655px;width:80px;height:25px;background:#990099"></div>
<div style="left:5px;top:656px;width:80px;height:25px;color:#fff;-webkit-text-stroke:0.25px #fff">德甲</div>
<div style="left:492px;top:655px;width:192px;height:25px;background:#fdf9f7"></div>
<div style="left:685px;top:655px;width:206px;height:25px;background:#f0f7fa"></div>
<div style="left:85.5px;top:656px;width:78px;height:25px;color:#333">24-11-23</div>
<div style="left:164.5px;top:656px;width:96px;height:25px;color:#222"><span style="color:#222">沃尔夫斯堡</span></div>
<div style="left:261.5px;top:656px;width:93px;height:25px;color:#222"><span style="color:#d40000">1-0</span><span style="color:#333">(0-0)</span></div>
<div style="left:355.5px;top:656px;width:38px;height:25px;color:#333">8-5</div>
<div style="left:394.5px;top:656px;width:96px;height:25px;color:#222"><span style="color:#137313">柏林联合</span></div>
<div style="left:491.5px;top:656px;width:50px;height:25px;color:#333">0.87</div>
<div style="left:542.5px;top:656px;width:87px;height:25px;color:#222">平/半</div>
<div style="left:630.5px;top:656px;width:53px;height:25px;color:#333">1.02</div>
<div style="left:684.5px;top:656px;width:67px;height:25px;color:#333">2.24</div>
<div style="left:752.5px;top:656px;width:68px;height:25px;color:#333">3.25</div>
<div style="left:821.5px;top:656px;width:69px;height:25px;color:#333">3.33</div>
<div style="left:891.5px;top:656px;width:39px;height:25px;color:#222"><span style="color:#1020b0">负</span></div>
<div style="left:931.5px;top:656px;width:39px;height:25px;color:#222"><span style="color:#1020b0">输</span></div>
<div style="left:971.5px;top:656px;width:59px;height:25px;color:#222"><span style="color:#1020b0">小</span></div>
<div style="left:5px;top:681px;width:1026px;height:25px;background:#f0f0f0"></div>
<div style="left:5px;top:681px;width:80px;height:25px;background:#990099"></div>
<div style="left:5px;top:682px;width:80px;height:25px;color:#fff;-webkit-text-stroke:0.25px #fff">德甲</div>
<div style="left:492px;top:681px;width:192px;height:25px;background:#fdf9f7"></div>
<div style="left:685px;top:681px;width:206px;height:25px;background:#f0f7fa"></div>
<div style="left:85.5px;top:682px;width:78px;height:25px;color:#333">24-11-09</div>
<div style="left:164.5px;top:682px;width:96px;height:25px;color:#222"><span style="color:#137313">柏林联合</span></div>
<div style="left:261.5px;top:682px;width:93px;height:25px;color:#222"><span style="color:#d40000">0-0</span><span style="color:#333">(0-0)</span></div>
<div style="left:355.5px;top:682px;width:38px;height:25px;color:#333">4-1</div>
<div style="left:394.5px;top:682px;width:96px;height:25px;color:#222"><span style="color:#222">弗赖堡</span></div>
<div style="left:491.5px;top:682px;width:50px;height:25px;color:#333">1.04</div>
<div style="left:542.5px;top:682px;width:87px;height:25px;color:#222">平/半</div>
<div style="left:630.5px;top:682px;width:53px;height:25px;color:#333">0.85</div>
<div style="left:684.5px;top:682px;width:67px;height:25px;color:#333">2.39</div>
<div style="left:752.5px;top:682px;width:68px;height:25px;color:#333">3.19</div>
<div style="left:821.5px;top:682px;width:69px;height:25px;color:#333">3.10</div>
<div style="left:891.5px;top:682px;width:39px;height:25px;color:#222"><span style="color:#137313">平</span></div>
<div style="left:931.5px;top:682px;width:39px;height:25px;color:#222"><span style="color:#1020b0">输</span></div>
<div style="left:971.5px;top:682px;width:59px;height:25px;color:#222"><span style="color:#1020b0">小</span></div>
<div style="left:5px;top:707px;width:1026px;height:25px;background:#fff"></div>
<div style="left:5px;top:707px;width:1026px;height:25px;color:#222;letter-spacing:0.2px;padding-left:1px">近<em>10</em>场,胜1平2负7, 胜率:<em>10%</em> 让胜率:<em>10%</em> 大率:<em>40%</em> 单率:<em>60%</em></div>
<div style="left:5px;top:408px;width:80px;height:39px;color:#333;line-height:39px">类型</div>
<div style="left:86px;top:408px;width:78px;height:39px;color:#333;line-height:39px">日期</div>
<div style="left:165px;top:408px;width:96px;height:39px;color:#333;line-height:39px">主场</div>
<div style="left:262px;top:408px;width:93px;height:39px;color:#333;line-height:39px">比分(半场)</div>
<div style="left:356px;top:408px;width:38px;height:39px;color:#333;line-height:39px">角球</div>
<div style="left:395px;top:408px;width:96px;height:39px;color:#333;line-height:39px">客场</div>
<div style="left:492px;top:428px;width:50px;height:18px;color:#333;line-height:18px">主</div>
<div style="left:543px;top:428px;width:87px;height:18px;color:#333;line-height:18px">让球</div>
<div style="left:631px;top:428px;width:53px;height:18px;color:#333;line-height:18px">客</div>
<div style="left:685px;top:428px;width:67px;height:18px;color:#333;line-height:18px">主</div>
<div style="left:753px;top:428px;width:68px;height:18px;color:#333;line-height:18px">和</div>
<div style="left:822px;top:428px;width:69px;height:18px;color:#333;line-height:18px">客</div>
<div style="left:892px;top:428px;width:39px;height:18px;color:#333;line-height:18px">胜负</div>
<div style="left:932px;top:428px;width:39px;height:18px;color:#333;line-height:18px">让球</div>
<div style="left:972px;top:428px;width:59px;height:18px;color:#333;line-height:18px">进球数</div>
<div style="left:4px;top:407px;width:1px;height:326px;background:#bcbcbc"></div>
<div style="left:85px;top:407px;width:1px;height:300px;background:#bcbcbc"></div>
<div style="left:164px;top:407px;width:1px;height:300px;background:#bcbcbc"></div>
<div style="left:261px;top:407px;width:1px;height:300px;background:#bcbcbc"></div>
<div style="left:355px;top:407px;width:1px;height:300px;background:#bcbcbc"></div>
<div style="left:394px;top:407px;width:1px;height:300px;background:#bcbcbc"></div>
<div style="left:491px;top:407px;width:1px;height:300px;background:#bcbcbc"></div>
<div style="left:542px;top:427px;width:1px;height:280px;background:#bcbcbc"></div>
<div style="left:630px;top:427px;width:1px;height:280px;background:#bcbcbc"></div>
<div style="left:684px;top:407px;width:1px;height:300px;background:#bcbcbc"></div>
<div style="left:752px;top:427px;width:1px;height:280px;background:#bcbcbc"></div>
<div style="left:821px;top:427px;width:1px;height:280px;background:#bcbcbc"></div>
<div style="left:891px;top:407px;width:1px;height:300px;background:#bcbcbc"></div>
<div style="left:931px;top:427px;width:1px;height:280px;background:#bcbcbc"></div>
<div style="left:971px;top:427px;width:1px;height:280px;background:#bcbcbc"></div>
<div style="left:1031px;top:407px;width:1px;height:326px;background:#bcbcbc"></div>
<div style="left:4px;top:407px;width:1028px;height:1px;background:#bcbcbc"></div>
<div style="left:491px;top:427px;width:540px;height:1px;background:#bcbcbc"></div>
<div style="left:4px;top:446px;width:1028px;height:1px;background:#bcbcbc"></div>
<div style="left:4px;top:472px;width:1028px;height:1px;background:#bcbcbc"></div>
<div style="left:4px;top:498px;width:1028px;height:1px;background:#bcbcbc"></div>
<div style="left:4px;top:524px;width:1028px;height:1px;background:#bcbcbc"></div>
<div style="left:4px;top:550px;width:1028px;height:1px;background:#bcbcbc"></div>
<div style="left:4px;top:576px;width:1028px;height:1px;background:#bcbcbc"></div>
<div style="left:4px;top:602px;width:1028px;height:1px;background:#bcbcbc"></div>
<div style="left:4px;top:628px;width:1028px;height:1px;background:#bcbcbc"></div>
<div style="left:4px;top:654px;width:1028px;height:1px;background:#bcbcbc"></div>
<div style="left:4px;top:680px;width:1028px;height:1px;background:#bcbcbc"></div>
<div style="left:4px;top:706px;width:1028px;height:1px;background:#bcbcbc"></div>
<div style="left:4px;top:732px;width:1028px;height:1px;background:#bcbcbc"></div>
<div style="left:4px;top:732px;width:1028px;height:1px;background:#bcbcbc"></div>
<div class="sel" style="left:528px;top:408px;width:61px;height:19px;line-height:17px;padding-left:5px;font-size:13px">Crow*<svg width="11" height="7" viewBox="0 0 11 7" style="position:absolute;right:3px;top:5px"><polyline points="0.6,1 5,5.4 9.4,1" fill="none" stroke="#000" stroke-width="2.1"/></svg></div>
<div class="sel" style="left:596px;top:408px;width:51px;height:19px;line-height:17px;padding-left:5px;font-size:13px">终指<svg width="11" height="7" viewBox="0 0 11 7" style="position:absolute;right:3px;top:5px"><polyline points="0.6,1 5,5.4 9.4,1" fill="none" stroke="#000" stroke-width="2.1"/></svg></div>
<div class="sel" style="left:723px;top:408px;width:70px;height:19px;line-height:17px;padding-left:5px;font-size:13px">平均值<svg width="11" height="7" viewBox="0 0 11 7" style="position:absolute;right:3px;top:5px"><polyline points="0.6,1 5,5.4 9.4,1" fill="none" stroke="#000" stroke-width="2.1"/></svg></div>
<div class="sel" style="left:801px;top:408px;width:51px;height:19px;line-height:17px;padding-left:5px;font-size:13px">终指<svg width="11" height="7" viewBox="0 0 11 7" style="position:absolute;right:3px;top:5px"><polyline points="0.6,1 5,5.4 9.4,1" fill="none" stroke="#000" stroke-width="2.1"/></svg></div>
<div class="sel" style="left:936px;top:408px;width:51px;height:19px;line-height:17px;padding-left:5px;font-size:13px">全场<svg width="11" height="7" viewBox="0 0 11 7" style="position:absolute;right:3px;top:5px"><polyline points="0.6,1 5,5.4 9.4,1" fill="none" stroke="#000" stroke-width="2.1"/></svg></div>
</body></html>
